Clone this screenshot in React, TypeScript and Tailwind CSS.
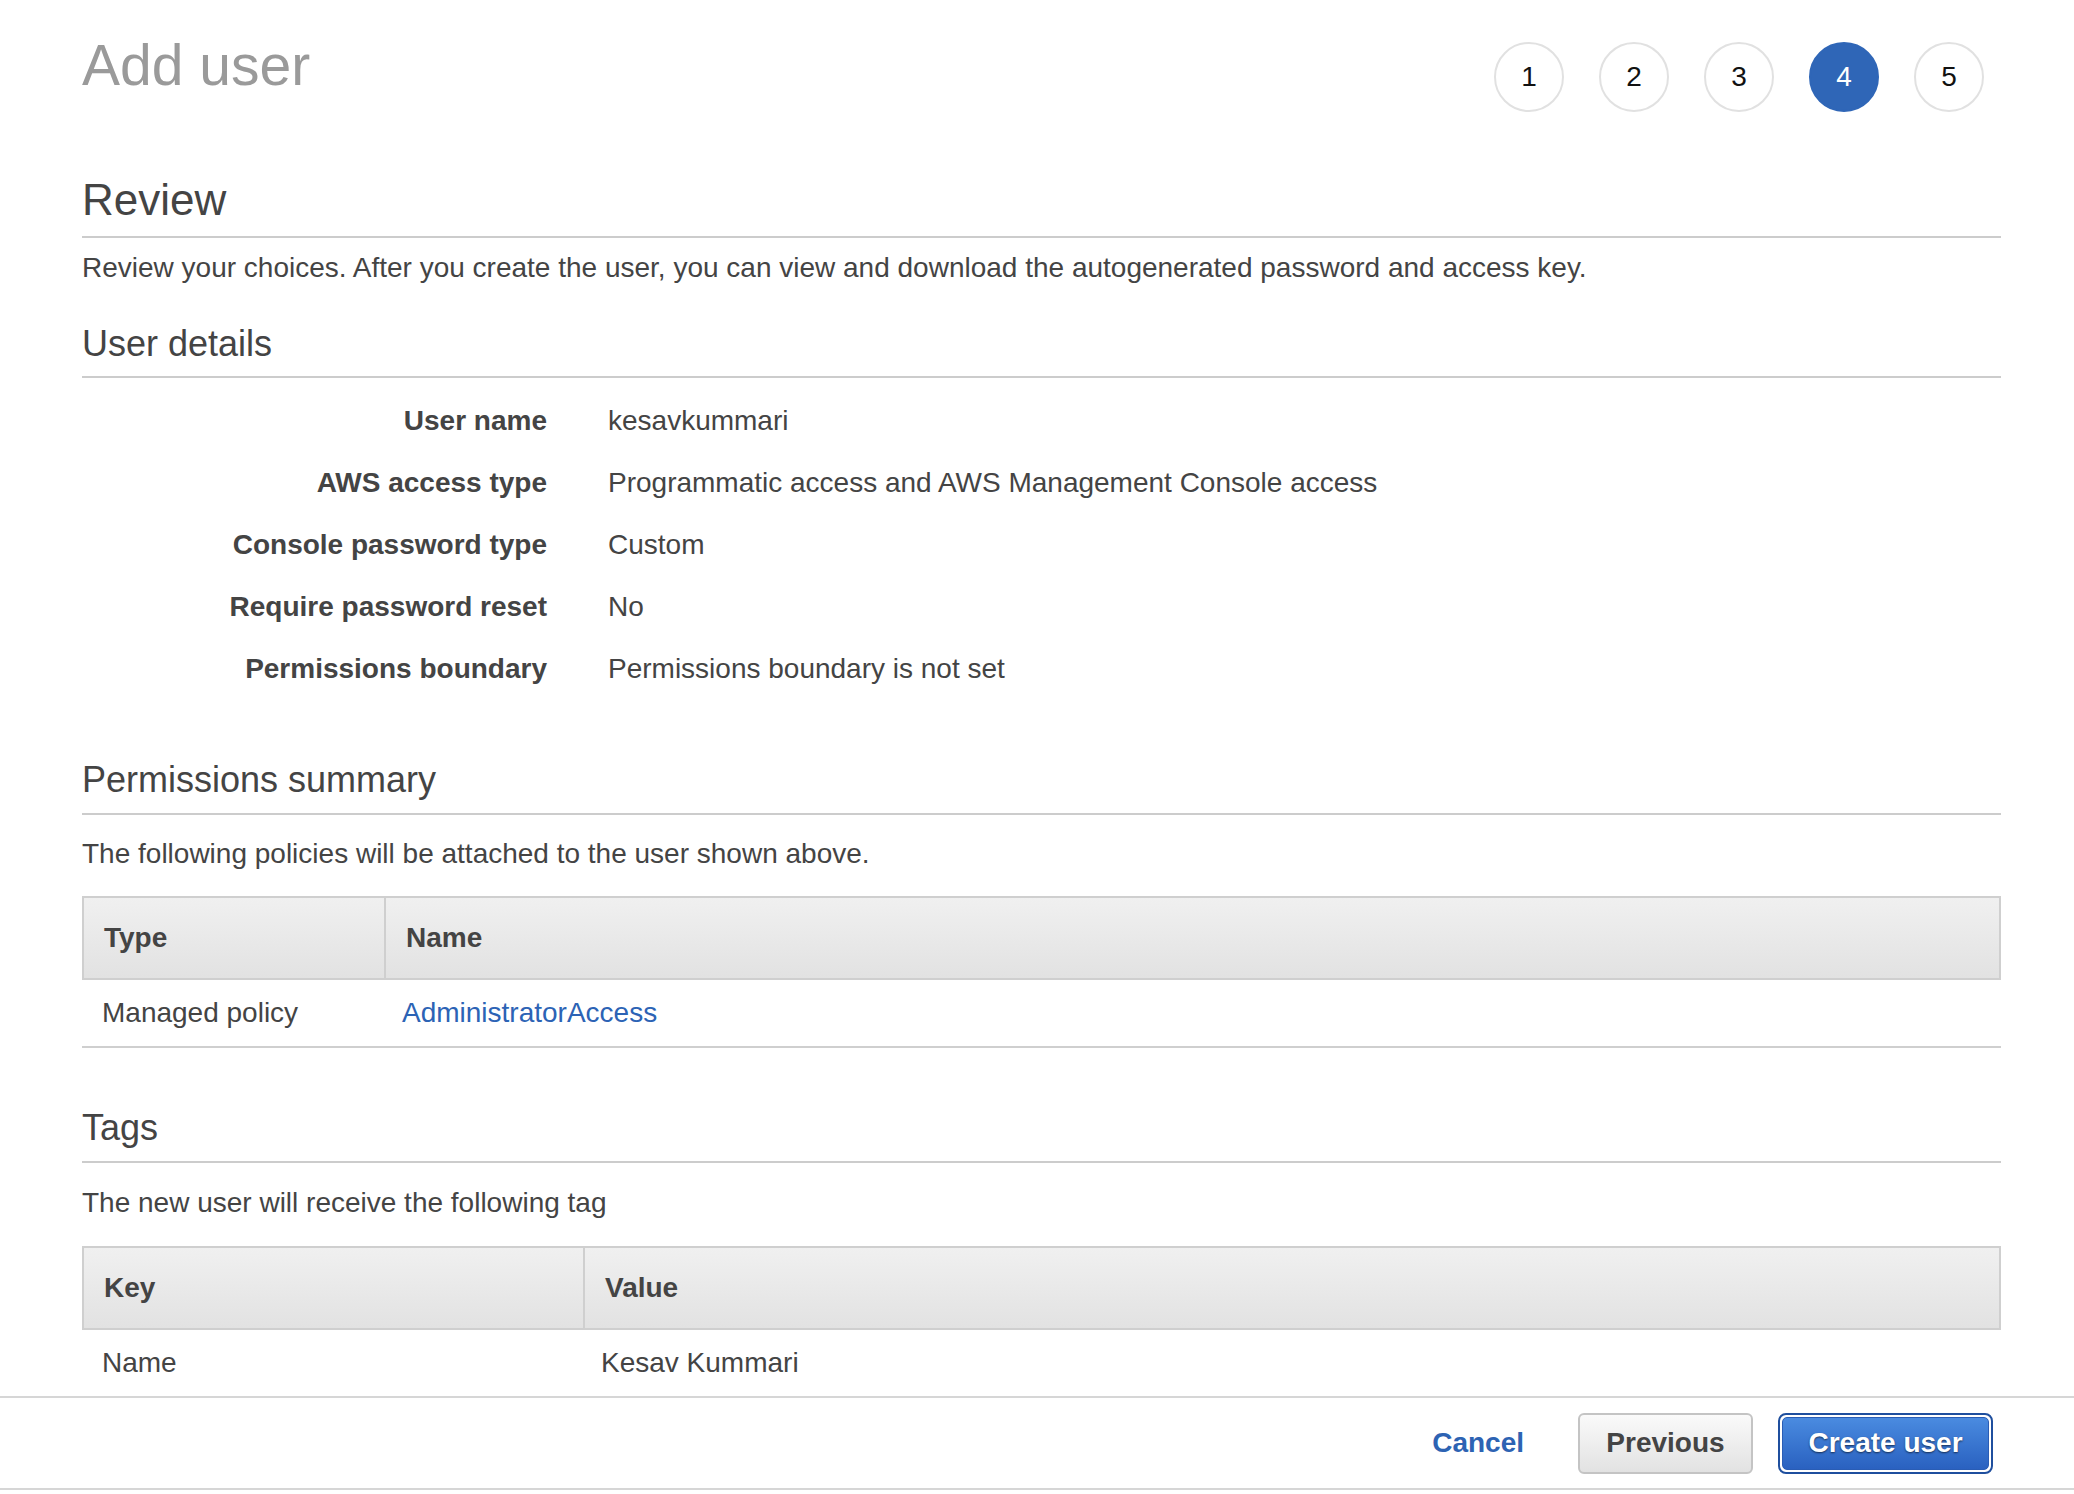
const steps = [1, 2, 3, 4, 5];
const current = 4;

const details = [
  { label: 'User name', value: 'kesavkummari' },
  { label: 'AWS access type', value: 'Programmatic access and AWS Management Console access' },
  { label: 'Console password type', value: 'Custom' },
  { label: 'Require password reset', value: 'No' },
  { label: 'Permissions boundary', value: 'Permissions boundary is not set' },
];

function SectionTitle({ children, className = '' }: { children: React.ReactNode; className?: string }) {
  return (
    <h3 className={`border-b-2 border-[#cccccc] text-[36px] leading-[36px] ${className}`}>
      {children}
    </h3>
  );
}

function Table({
  firstWidth,
  headers,
  cells,
}: {
  firstWidth: string;
  headers: [string, string];
  cells: [React.ReactNode, React.ReactNode];
}) {
  return (
    <div>
      <div className="flex h-[84px] border-2 border-[#cfcfcf] bg-linear-to-b from-[#f0f0f0] to-[#e2e2e2] font-bold">
        <div className={`${firstWidth} shrink-0 px-[20px] leading-[80px]`}>{headers[0]}</div>
        <div className="flex-1 border-l-2 border-[#cfcfcf] px-[20px] leading-[80px]">{headers[1]}</div>
      </div>
      <div className="flex h-[68px] border-b-2 border-[#cfcfcf]">
        <div className={`${firstWidth} shrink-0 px-[20px] leading-[66px]`}>{cells[0]}</div>
        <div className="flex-1 px-[20px] leading-[66px]">{cells[1]}</div>
      </div>
    </div>
  );
}

export default function App() {
  return (
    <div className="flex h-[1494px] flex-col overflow-hidden bg-white font-['Liberation_Sans',Arial,sans-serif] text-[28px] text-[#444]">
      <main className="min-h-0 flex-1 overflow-hidden pl-[82px] pr-[73px]">
        <div className="flex h-[112px] items-start justify-between">
          <h1 className="pt-[36px] text-[57px] leading-[58px] text-[#9a9a9a]">Add user</h1>
          <ol className="mr-[17px] mt-[42px] flex gap-[35px]">
            {steps.map((n) => (
              <li
                key={n}
                className={
                  n === current
                    ? 'flex h-[70px] w-[70px] items-center justify-center rounded-full border-2 border-[#2f66b7] bg-[#2f66b7] text-[28px] text-white'
                    : 'flex h-[70px] w-[70px] items-center justify-center rounded-full border-2 border-[#e1e1e1] text-[28px] text-[#111]'
                }
              >
                {n}
              </li>
            ))}
          </ol>
        </div>

        <h2 className="mt-[66px] border-b-2 border-[#cccccc] pb-[14px] text-[44px] leading-[44px]">Review</h2>
        <p className="mt-[16px] leading-[28px]">
          Review your choices. After you create the user, you can view and download the autogenerated password and
          access key.
        </p>

        <SectionTitle className="mt-[44px] pb-[14px]">User details</SectionTitle>
        <dl className="mt-[12px]">
          {details.map((d) => (
            <div key={d.label} className="flex h-[62px] leading-[62px]">
              <dt className="w-[465px] shrink-0 text-right font-bold">{d.label}</dt>
              <dd className="ml-[61px]">{d.value}</dd>
            </div>
          ))}
        </dl>

        <SectionTitle className="mt-[62px] pb-[15px]">Permissions summary</SectionTitle>
        <p className="mt-[25px] leading-[28px]">The following policies will be attached to the user shown above.</p>
        <div className="mt-[28px]">
          <Table
            firstWidth="w-[300px]"
            headers={['Type', 'Name']}
            cells={['Managed policy', <a className="text-[#2c63b5]">AdministratorAccess</a>]}
          />
        </div>

        <SectionTitle className="mt-[62px] pb-[15px]">Tags</SectionTitle>
        <p className="mt-[26px] leading-[28px]">The new user will receive the following tag</p>
        <div className="mt-[29px]">
          <Table firstWidth="w-[499px]" headers={['Key', 'Value']} cells={['Name', 'Kesav Kummari']} />
        </div>
      </main>

      <footer className="mb-[4px] flex h-[94px] shrink-0 items-center justify-end border-y-2 border-[#d6d6d6] pr-[81px]">
        <button className="mr-[54px] font-bold text-[#2d63b3]">Cancel</button>
        <button className="mr-[25px] h-[61px] w-[175px] rounded-[6px] border-2 border-[#c4c4c4] bg-linear-to-b from-[#fafafa] to-[#e2e2e2] font-bold text-[#444]">
          Previous
        </button>
        <button className="h-[61px] w-[215px] rounded-[8px] border-2 border-[#1f4f9e] bg-white p-[2px]">
          <span className="flex h-full w-full items-center justify-center rounded-[5px] border border-[#2a5db5] bg-linear-to-b from-[#4a8be0] to-[#2a61c0] font-bold text-white [text-shadow:0_1px_2px_rgba(0,0,0,0.6)]">
            Create user
          </span>
        </button>
      </footer>
    </div>
  );
}
